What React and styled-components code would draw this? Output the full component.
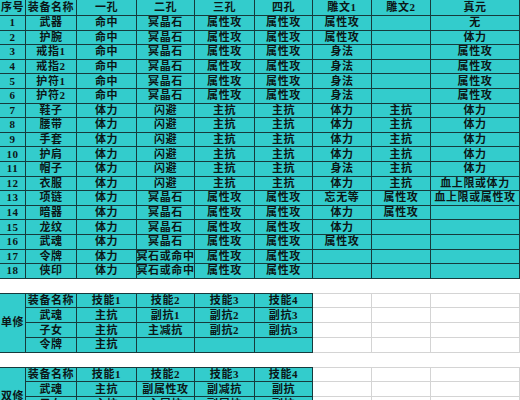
import React from 'react'
import styled, { createGlobalStyle } from 'styled-components'

const GlobalStyle = createGlobalStyle`
  html, body {
    margin: 0;
    padding: 0;
    background: #ffffff;
  }
  body {
    font-family: "Liberation Serif", "Noto Sans CJK SC", serif;
  }
`

const COLS = '26px 51px 60px 58px 60px 58px 59px 59px 89px'
const TEAL = '#33cccc'
const LINE = '#163a3c'
const GRID = '#d4d4d4'

const Page = styled.div`
  width: 520px;
  height: 400px;
  overflow: hidden;
  display: flex;
  flex-direction: column;
`

const Sheet = styled.div`
  display: grid;
  grid-template-columns: ${COLS};
  grid-template-rows: 16px;
  grid-auto-rows: 14.6px;
  background: ${TEAL};
`

const Cell = styled.div`
  box-sizing: border-box;
  display: flex;
  align-items: center;
  justify-content: center;
  border-right: 1px solid ${LINE};
  border-bottom: 1px solid ${LINE};
  font-size: 11px;
  letter-spacing: 0.6px;
  font-weight: 700;
  color: #0c1616;
  white-space: nowrap;
  overflow: hidden;
  line-height: 1;
  grid-row: ${(p) => (p.$span ? `span ${p.$span}` : 'auto')};
`

const Spacer = styled.div`
  height: 14px;
  flex-shrink: 0;
`

const Section = styled.div`
  display: flex;
  flex-shrink: 0;
`

const TealBlock = styled.div`
  display: grid;
  grid-template-columns: 26px 51px 60px 58px 60px 58px;
  grid-auto-rows: 14.75px;
  background: ${TEAL};
  border-top: 1px solid ${LINE};
`

const BlankBlock = styled.div`
  display: grid;
  grid-template-columns: 59px 59px 89px;
  grid-auto-rows: 14.75px;
  border-top: 1px solid ${GRID};
`

const BlankCell = styled.div`
  box-sizing: border-box;
  border-right: 1px solid ${GRID};
  border-bottom: 1px solid ${GRID};
`

const header = ['序号', '装备名称', '一孔', '二孔', '三孔', '四孔', '雕文1', '雕文2', '真元']

const rows = [
  ['1', '武器', '命中', '冥晶石', '属性攻', '属性攻', '属性攻', '', '无'],
  ['2', '护腕', '命中', '冥晶石', '属性攻', '属性攻', '属性攻', '', '体力'],
  ['3', '戒指1', '命中', '冥晶石', '属性攻', '属性攻', '身法', '', '属性攻'],
  ['4', '戒指2', '命中', '冥晶石', '属性攻', '属性攻', '身法', '', '属性攻'],
  ['5', '护符1', '命中', '冥晶石', '属性攻', '属性攻', '身法', '', '属性攻'],
  ['6', '护符2', '命中', '冥晶石', '属性攻', '属性攻', '身法', '', '属性攻'],
  ['7', '鞋子', '体力', '闪避', '主抗', '主抗', '体力', '主抗', '体力'],
  ['8', '腰带', '体力', '闪避', '主抗', '主抗', '体力', '主抗', '体力'],
  ['9', '手套', '体力', '闪避', '主抗', '主抗', '体力', '主抗', '体力'],
  ['10', '护肩', '体力', '闪避', '主抗', '主抗', '体力', '主抗', '体力'],
  ['11', '帽子', '体力', '闪避', '主抗', '主抗', '身法', '主抗', '体力'],
  ['12', '衣服', '体力', '闪避', '主抗', '主抗', '体力', '主抗', '血上限或体力'],
  ['13', '项链', '体力', '冥晶石', '属性攻', '属性攻', '忘无等', '属性攻', '血上限或属性攻'],
  ['14', '暗器', '体力', '冥晶石', '属性攻', '属性攻', '体力', '属性攻', ''],
  ['15', '龙纹', '体力', '冥晶石', '属性攻', '属性攻', '体力', '', ''],
  ['16', '武魂', '体力', '冥晶石', '属性攻', '属性攻', '属性攻', '', ''],
  ['17', '令牌', '体力', '冥石或命中', '属性攻', '属性攻', '', '', ''],
  ['18', '侠印', '体力', '冥石或命中', '属性攻', '属性攻', '', '', ''],
]

const skillSets = [
  {
    label: '单修',
    rows: [
      ['装备名称', '技能1', '技能2', '技能3', '技能4'],
      ['武魂', '主抗', '副抗1', '副抗2', '副抗3'],
      ['子女', '主抗', '主减抗', '副抗2', '副抗3'],
      ['令牌', '主抗', '', '', ''],
    ],
  },
  {
    label: '双修',
    rows: [
      ['装备名称', '技能1', '技能2', '技能3', '技能4'],
      ['武魂', '主抗', '副属性攻', '副减抗', '副抗'],
      ['子女', '主抗', '主属抗', '副属抗', '副抗'],
      ['令牌', '主抗', '', '', ''],
    ],
  },
]

function SkillSection({ label, rows }) {
  return (
    <Section>
      <TealBlock>
        <Cell $span={rows.length}>{label}</Cell>
        {rows.map((r, i) => r.map((v, j) => <Cell key={`${i}-${j}`}>{v}</Cell>))}
      </TealBlock>
      <BlankBlock>
        {rows.map((r, i) => [0, 1, 2].map((j) => <BlankCell key={`${i}-${j}`} />))}
      </BlankBlock>
    </Section>
  )
}

export default function App() {
  return (
    <Page>
      <GlobalStyle />
      <Sheet>
        {header.map((h) => (
          <Cell key={h}>{h}</Cell>
        ))}
        {rows.map((r, i) => r.map((v, j) => <Cell key={`${i}-${j}`}>{v}</Cell>))}
      </Sheet>
      <Spacer />
      <SkillSection {...skillSets[0]} />
      <Spacer />
      <SkillSection {...skillSets[1]} />
    </Page>
  )
}
